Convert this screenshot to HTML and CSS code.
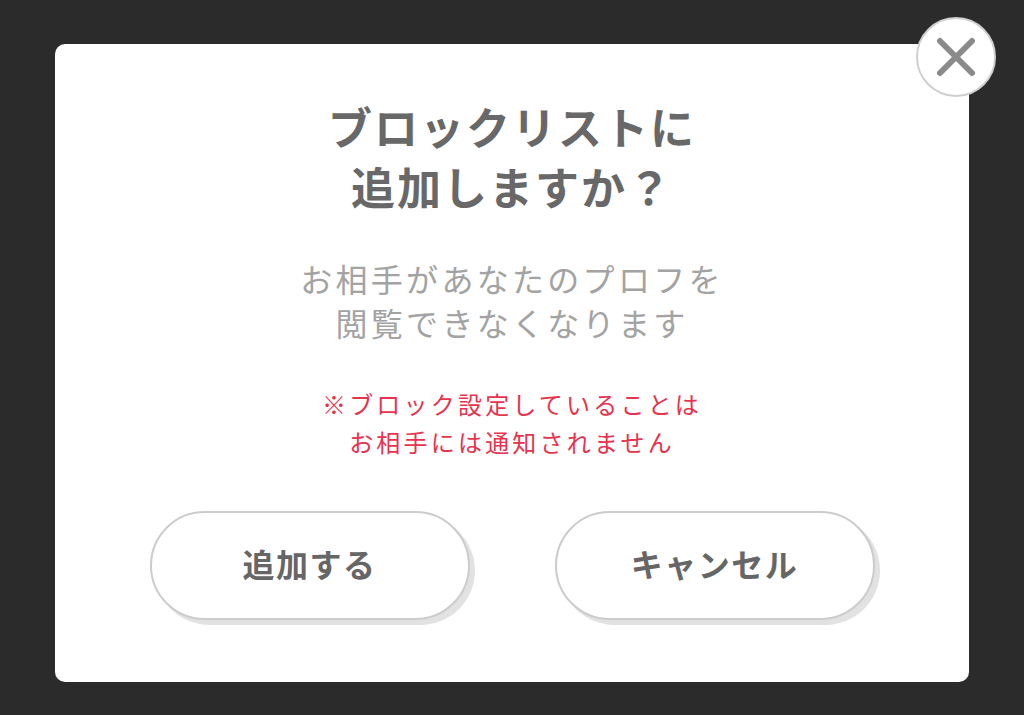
FILE: index.html
```html
<!DOCTYPE html>
<html lang="ja">
<head>
    <meta charset="UTF-8">
    <meta name="viewport" content="width=device-width, initial-scale=1.0">
    <title>ブロックリストに追加</title>
    <link rel="stylesheet" href="styles.css">
</head>
<body>
    <div class="modal">
        <button class="close-btn" aria-label="閉じる">
            <svg width="40" height="40" viewBox="0 0 40 40">
                <path d="M4 4 L36 36 M36 4 L4 36" stroke="#8a8a8a" stroke-width="6" stroke-linecap="round" fill="none"/>
            </svg>
        </button>

        <h1 class="title">ブロックリストに<br>追加しますか？</h1>

        <p class="desc">お相手があなたのプロフを<br>閲覧できなくなります</p>

        <p class="note">※ブロック設定していることは<br>お相手には通知されません</p>

        <div class="actions">
            <button class="pill-btn">追加する</button>
            <button class="pill-btn">キャンセル</button>
        </div>
    </div>
</body>
</html>
```

FILE: styles.css
```css
body {
    margin: 0;
    padding: 44px 55px 0;
    background-color: #2b2b2b;
    font-family: "Noto Sans CJK JP", "Noto Sans", sans-serif;
    height: 715px;
    box-sizing: border-box;
    overflow: hidden;
}

.modal {
    position: relative;
    width: 914px;
    height: 638px;
    box-sizing: border-box;
    background-color: #FFFFFF;
    border-radius: 10px;
    padding-top: 52px;
    text-align: center;
}

.close-btn {
    position: absolute;
    top: -27px;
    right: -27px;
    width: 80px;
    height: 80px;
    border-radius: 50%;
    border: 2px solid #cfcfcf;
    background-color: #FFFFFF;
    padding: 0;
    display: flex;
    align-items: center;
    justify-content: center;
    cursor: pointer;
}

.title {
    margin: 0;
    font-size: 44px;
    line-height: 60px;
    letter-spacing: 2px;
    font-weight: bold;
    color: #686868;
}

.desc {
    margin: 40px 0 0;
    font-size: 32px;
    line-height: 44px;
    letter-spacing: 3.3px;
    color: #a3a3a3;
}

.note {
    margin: 41px 0 0;
    font-size: 24px;
    line-height: 38px;
    letter-spacing: 3.2px;
    color: #e6344e;
}

.actions {
    display: flex;
    justify-content: center;
    gap: 85px;
    margin-top: 50px;
}

.pill-btn {
    width: 320px;
    height: 109px;
    padding: 0 0 6px;
    border-radius: 55px;
    border: 2px solid #cccccc;
    background-color: #FFFFFF;
    box-shadow: 5px 5px 0 #e2e2e2;
    font-family: inherit;
    font-size: 32px;
    font-weight: bold;
    letter-spacing: 1.5px;
    color: #666666;
    cursor: pointer;
}
```
